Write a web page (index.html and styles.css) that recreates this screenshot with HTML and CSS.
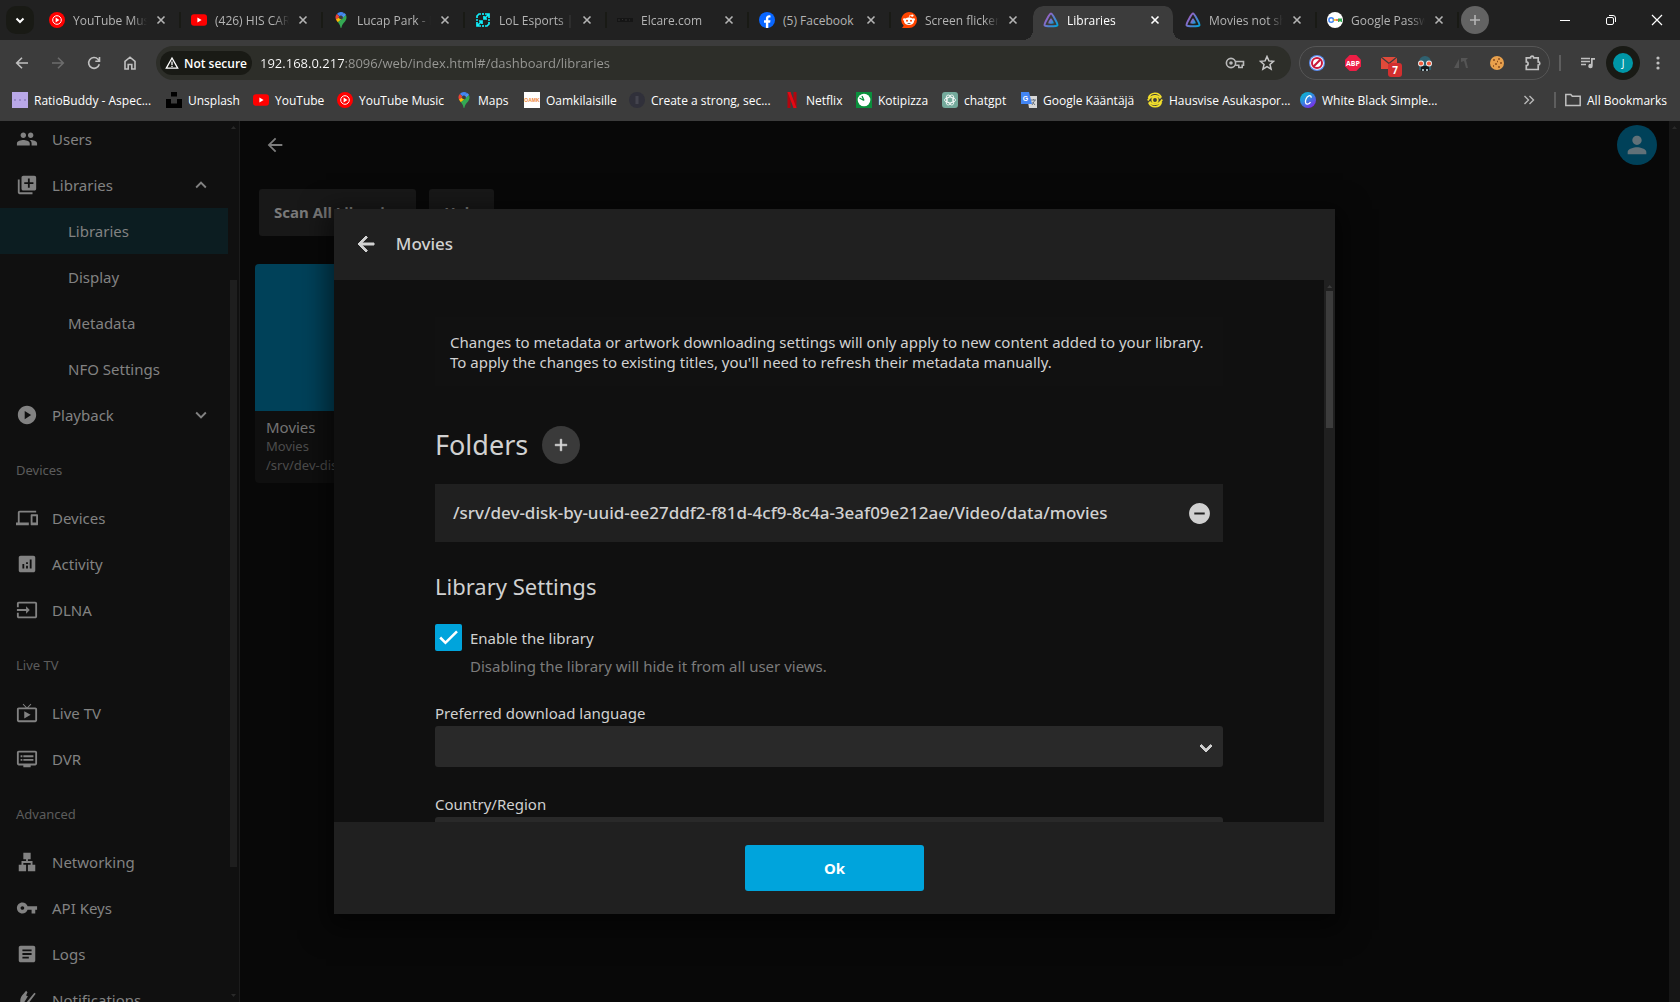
FILE: index.html
```html
<!DOCTYPE html>
<html lang="en">
<head>
<meta charset="utf-8">
<title>Libraries</title>
<link rel="stylesheet" href="styles.css">
</head>
<body>
<svg class="sprite" aria-hidden="true">
  <defs>
    <linearGradient id="jf" x1="0" y1="0.3" x2="1" y2="1"><stop offset="0" stop-color="#aa5cc3"/><stop offset="1" stop-color="#00a4dc"/></linearGradient>
    <linearGradient id="cv" x1="0" y1="0" x2="0.7" y2="1"><stop offset="0" stop-color="#00c4cc"/><stop offset="0.5" stop-color="#2f8be0"/><stop offset="1" stop-color="#7d2ae8"/></linearGradient>
  </defs>
  <symbol id="i-close" viewBox="0 0 16 16"><path d="M4.500 4.500l7 7M11.500 4.500l-7 7" stroke="currentColor" stroke-width="1.600" fill="none"/></symbol>
  <symbol id="i-ytm" viewBox="0 0 16 16"><circle cx="8" cy="8" r="8" fill="#f00"/><circle cx="8" cy="8" r="4.300" fill="none" stroke="#fff" stroke-width="1"/><path d="M6.600 5.600v4.800L10.400 8z" fill="#fff"/></symbol>
  <symbol id="i-yt" viewBox="0 0 16 16"><rect y="2.300" width="16" height="11.400" rx="3" fill="#f00"/><path d="M6.400 5.600v4.800L10.600 8z" fill="#fff"/></symbol>
  <symbol id="i-maps" viewBox="0 0 16 16"><path d="M8 0a5.500 5.500 0 0 0-4.200 2l3 2.500L11 .9A5.500 5.500 0 0 0 8 0z" fill="#4285f4"/><path d="M3.800 2A5.400 5.400 0 0 0 3.300 8.200L6.500 4.400z" fill="#ea4335"/><path d="M11 .9L6.500 4.400l3 2.500 3.600-4A5.600 5.600 0 0 0 11 .9z" fill="#4a90f5"/><path d="M6.500 5.200L3 7.600c.5 1 1.200 1.800 1.900 2.700L9.600 6.700z" fill="#fbbc04"/><path d="M13 2.900L4.900 10.300C6.300 12 7.300 13.500 7.400 15.200c.1.900 1.100.9 1.200 0 .3-3.700 4.900-5.500 4.900-9.700 0-1-.2-1.800-.5-2.600z" fill="#34a853"/><circle cx="8" cy="5.400" r="1.900" fill="#3c3c3c"/></symbol>
  <symbol id="i-jf" viewBox="0 0 16 16"><path d="M8 1.600C6.700 1.600.9 12 1.600 13.300s12.100 1.300 12.800 0S9.300 1.600 8 1.600z" fill="none" stroke="url(#jf)" stroke-width="2"/><path d="M8 6.300c-.7 0-3 4.300-2.700 4.900s5.100.6 5.400 0S8.700 6.300 8 6.300z" fill="url(#jf)"/></symbol>
  <symbol id="i-back" viewBox="0 0 24 24"><path d="M20 11H7.830l5.590-5.590L12 4l-8 8 8 8 1.410-1.410L7.830 13H20v-2z" fill="currentColor"/></symbol>
  <symbol id="i-down" viewBox="0 0 24 24"><path d="M16.590 8.590L12 13.170 7.410 8.590 6 10l6 6 6-6z" fill="currentColor"/></symbol>
</svg>

<header class="browser">
  <div class="tabstrip">
    <button class="tab-search" aria-label="Search tabs"><svg viewBox="0 0 16 16"><path d="M4.500 6.500L8 10l3.500-3.500" fill="none" stroke="#fff" stroke-width="2"/></svg></button>
    <div class="tab"><svg class="fav"><use href="#i-ytm"/></svg><span class="tab-title">YouTube Music</span><button class="tab-close" aria-label="Close"><svg><use href="#i-close"/></svg></button></div>
    <div class="tab"><svg class="fav"><use href="#i-yt"/></svg><span class="tab-title">(426) HIS CARRY</span><button class="tab-close" aria-label="Close"><svg><use href="#i-close"/></svg></button></div>
    <div class="tab"><svg class="fav"><use href="#i-maps"/></svg><span class="tab-title">Lucap Park - Map</span><button class="tab-close" aria-label="Close"><svg><use href="#i-close"/></svg></button></div>
    <div class="tab"><svg class="fav" viewBox="0 0 16 16"><g fill="none" stroke="#0ff0fc" stroke-width="1.700"><path d="M2 6V4l2-2h2M10 2h4v4M14 10v2l-2 2h-2M6 14H2v-4M8 1v2M1 8h2M13 8h2M8 13v2M13.500 2.500L9.500 6.500M2.500 13.500L6.500 9.500M9 4v3h3M7 12V9H4"/></g></svg><span class="tab-title">LoL Esports | Schedule</span><button class="tab-close" aria-label="Close"><svg><use href="#i-close"/></svg></button></div>
    <div class="tab"><svg class="fav" viewBox="0 0 16 16"><path d="M0 6h16v4H0z" fill="#151515"/><path d="M1 8h2M5 7.500h1M8 8h2M12 8h1" stroke="#333"/></svg><span class="tab-title">Elcare.com</span><button class="tab-close" aria-label="Close"><svg><use href="#i-close"/></svg></button></div>
    <div class="tab"><svg class="fav" viewBox="0 0 16 16"><circle cx="8" cy="8" r="8" fill="#0866ff"/><path d="M6.900 16v-5.300H5V8.300h1.900V7c0-2.400 1.200-3.700 3.300-3.700.6 0 1 .1 1.300.2v2.100h-1c-.9 0-1.200.4-1.200 1.300v1.400h2.200l-.4 2.400H9.300V16z" fill="#fff"/></svg><span class="tab-title tab-title-full">(5) Facebook</span><button class="tab-close" aria-label="Close"><svg><use href="#i-close"/></svg></button></div>
    <div class="tab tab-last"><svg class="fav" viewBox="0 0 16 16"><path d="M8 0a8 8 0 1 1 0 16H1l1.700-2.300A8 8 0 0 1 8 0z" fill="#ff4500"/><ellipse cx="8" cy="9.300" rx="5" ry="3.800" fill="#fff"/><circle cx="3.300" cy="7.500" r="1.300" fill="#fff"/><circle cx="12.700" cy="7.500" r="1.300" fill="#fff"/><circle cx="11.300" cy="3.600" r="1.200" fill="#fff"/><path d="M8 6l.8-2.800 2 .5" stroke="#fff" stroke-width=".7" fill="none"/><circle cx="6" cy="8.800" r="1" fill="#ff4500"/><circle cx="10" cy="8.800" r="1" fill="#ff4500"/><path d="M6 11c1 .9 3 .9 4 0z" fill="#222"/></svg><span class="tab-title">Screen flickering</span><button class="tab-close" aria-label="Close"><svg><use href="#i-close"/></svg></button></div>
    <div class="tab tab-active"><svg class="fav"><use href="#i-jf"/></svg><span class="tab-title">Libraries</span><button class="tab-close" aria-label="Close"><svg><use href="#i-close"/></svg></button></div>
    <div class="tab"><svg class="fav"><use href="#i-jf"/></svg><span class="tab-title">Movies not showing</span><button class="tab-close" aria-label="Close"><svg><use href="#i-close"/></svg></button></div>
    <div class="tab"><svg class="fav" viewBox="0 0 16 16"><circle cx="8" cy="8" r="8" fill="#fff"/><circle cx="4.200" cy="8" r="2.300" fill="none" stroke="#4285f4" stroke-width="1.500"/><path d="M6.500 7.200H9v1.600H6.500z" fill="#fbbc04"/><path d="M9 7.200h2v1.600H9z" fill="#ea4335"/><path d="M11 6.500h4v3.500h-1.500V9h-1v1H11z" fill="#34a853"/></svg><span class="tab-title">Google Password</span><button class="tab-close" aria-label="Close"><svg><use href="#i-close"/></svg></button></div>
    <button class="new-tab" aria-label="New tab"><svg viewBox="0 0 16 16"><path d="M8 3v10M3 8h10" stroke="#b4b4b4" stroke-width="1.600"/></svg></button>
    <div class="window-controls">
      <button aria-label="Minimize"><svg viewBox="0 0 12 12"><path d="M1 6.500h10" stroke="#fff"/></svg></button>
      <button aria-label="Restore"><svg viewBox="0 0 12 12"><rect x="1.500" y="3.500" width="7" height="7" rx="1.500" fill="none" stroke="#fff"/><path d="M4 1.500h4a2.500 2.500 0 0 1 2.500 2.500v4" fill="none" stroke="#fff"/></svg></button>
      <button aria-label="Close window"><svg viewBox="0 0 12 12"><path d="M1 1l10 10M11 1L1 11" stroke="#fff" stroke-width="1.200"/></svg></button>
    </div>
  </div>

  <div class="toolbar">
    <button class="nav-btn" aria-label="Back"><svg viewBox="0 0 16 16"><path d="M14 8H3M8 2.700L2.700 8 8 13.300" fill="none" stroke="#c0c0c0" stroke-width="1.600"/></svg></button>
    <button class="nav-btn" aria-label="Forward"><svg viewBox="0 0 16 16"><path d="M2 8h11M8 2.700L13.300 8 8 13.300" fill="none" stroke="#6c6c6c" stroke-width="1.600"/></svg></button>
    <button class="nav-btn" aria-label="Reload"><svg viewBox="0 0 16 16"><path d="M13.300 9.300A5.400 5.400 0 1 1 12 4.200L13.300 5.600M13.500 2v4.200H9.300" fill="none" stroke="#c0c0c0" stroke-width="1.600"/></svg></button>
    <button class="nav-btn" aria-label="Home"><svg viewBox="0 0 16 16"><path d="M3 14V6.300L8 2.200l5 4.100V14H9.800V9.500H6.200V14z" fill="none" stroke="#c0c0c0" stroke-width="1.600"/></svg></button>
    <div class="omnibox">
      <button class="chip"><svg viewBox="0 0 14 14"><path d="M7 2L1.300 12.200h11.400z" fill="none" stroke="#fff" stroke-width="1.300"/><path d="M7 5.500v3.500M7 9.800v1.300" stroke="#fff" stroke-width="1.300"/></svg>Not secure</button>
      <input class="url" type="text" aria-label="Address" value="192.168.0.217:8096/web/index.html#/dashboard/libraries">
      <button class="omni-btn" aria-label="Passwords"><svg viewBox="0 0 20 16"><circle cx="6" cy="8" r="4.600" fill="none" stroke="#b9b9b9" stroke-width="1.600"/><circle cx="6" cy="8" r="1.800" fill="#b9b9b9"/><path d="M10.500 6.500h8v3.700h-1.300v2.300h-3.400v-2.300h-3.500" fill="none" stroke="#b9b9b9" stroke-width="1.600"/></svg></button>
      <button class="omni-btn" aria-label="Bookmark"><svg viewBox="0 0 16 16"><path d="M8 1.500l1.900 4.400 4.700.4-3.600 3.100 1.100 4.700L8 11.600l-4.100 2.500L5 9.400 1.400 6.300l4.700-.4z" fill="none" stroke="#c8c8c8" stroke-width="1.500"/></svg></button>
    </div>
    <div class="extensions">
      <button aria-label="Blocker"><svg viewBox="0 0 16 16"><circle cx="8" cy="8" r="8" fill="#5b8def"/><circle cx="8" cy="8" r="6.800" fill="#fff"/><circle cx="8" cy="8" r="5" fill="#fff" stroke="#c8193c" stroke-width="2"/><path d="M4.500 11.500l7-7" stroke="#c8193c" stroke-width="2.200"/></svg></button>
      <button aria-label="Adblock"><svg viewBox="0 0 16 16"><path d="M4.700 0h6.600L16 4.700v6.600L11.300 16H4.700L0 11.300V4.700z" fill="#ed1e45"/><text x="8" y="10.600" class="abp">ABP</text></svg></button>
      <button class="has-badge" aria-label="Mail"><svg viewBox="0 0 16 16"><path d="M0 2h16v12H0z" fill="#e04a3a"/><path d="M0 2l8 6.500L16 2" fill="none" stroke="#3c3c3c" stroke-width="1.300"/></svg><span class="badge">7</span></button>
      <button aria-label="Robot"><svg viewBox="0 0 16 16"><path d="M2 7a6 6 0 0 1 12 0v8H2z" fill="#2f6170"/><path d="M4 11h8v5H4z" fill="#151a1e"/><path d="M5 15h2M9 15h2" stroke="#9fb0b5" stroke-width="2"/><circle cx="4" cy="8.500" r="3" fill="#eee"/><circle cx="12" cy="8.500" r="3" fill="#eee"/><circle cx="4" cy="8.500" r="2.100" fill="#f05b3c"/><circle cx="12" cy="8.500" r="2.100" fill="#f05b3c"/></svg></button>
      <button aria-label="Inactive extension"><svg viewBox="0 0 16 16"><path d="M1 13L6 4v9zM8 3h7l-2 2 2 8h-2l-2-7-3 1z" fill="#555"/></svg></button>
      <button aria-label="Cookies"><svg viewBox="0 0 16 16"><circle cx="8" cy="8" r="7" fill="#e8a04c"/><path d="M4 5h2M9 4h2M11 8h2M6 9h2M4 11h1M9 12h2M8 6.500h1" stroke="#8a4c1c" stroke-width="1.600"/></svg></button>
      <button aria-label="Extensions"><svg viewBox="0 0 16 16"><path d="M1.300 2.800h4.200a1.600 1.600 0 0 1 3.200 0h4.500v4a1.600 1.600 0 0 1 0 3.200v4.500H1.300v-4c2.400 0 2.400-3.600 0-3.600z" fill="none" stroke="#c0c0c0" stroke-width="1.700"/></svg></button>
    </div>
    <span class="bar-divider"></span>
    <button class="nav-btn" aria-label="Media"><svg viewBox="0 0 16 16"><path d="M1 3.500h9M1 6.500h9M1 9.500h5" stroke="#c0c0c0" stroke-width="1.500"/><path d="M11 3h4v1.800h-2.300V11a2.200 2.200 0 1 1-1.700-2.100z" fill="#c0c0c0"/></svg></button>
    <button class="profile" aria-label="Profile"><span>J</span></button>
    <button class="nav-btn" aria-label="Menu"><svg viewBox="0 0 16 16" fill="#c0c0c0"><circle cx="8" cy="3" r="1.600"/><circle cx="8" cy="8" r="1.600"/><circle cx="8" cy="13" r="1.600"/></svg></button>
  </div>

  <nav class="bookmarks" aria-label="Bookmarks">
    <a href="#"><svg viewBox="0 0 16 16"><path d="M0 0h16v16H0z" fill="#b9a8e8"/><path d="M2 8h2M7 8h2M12 8h2" stroke="#8f7fc0" stroke-width="1.500"/></svg>RatioBuddy - Aspec...</a>
    <a href="#"><svg viewBox="0 0 16 16"><path d="M5 0h6v4.500H5zM0 7h5v4.500h6V7h5v9H0z" fill="#000"/></svg>Unsplash</a>
    <a href="#"><svg><use href="#i-yt"/></svg>YouTube</a>
    <a href="#"><svg><use href="#i-ytm"/></svg>YouTube Music</a>
    <a href="#"><svg><use href="#i-maps"/></svg>Maps</a>
    <a href="#"><svg viewBox="0 0 16 16"><path d="M0 0h16v16H0z" fill="#fff"/><text x="8" y="10" class="oamk">OAMK</text></svg>Oamkilaisille</a>
    <a href="#"><svg viewBox="0 0 16 16"><circle cx="8" cy="8" r="8" fill="#30303a"/><path d="M8 4v8" stroke="#44444e" stroke-width="3"/></svg>Create a strong, sec...</a>
    <a href="#"><svg viewBox="0 0 16 16"><path d="M3.500 0h3v16h-3zM9.500 0h3v16h-3z" fill="#b1060f"/><path d="M3.500 0h3l6 16h-3z" fill="#e50914"/></svg>Netflix</a>
    <a href="#"><svg viewBox="0 0 16 16"><path d="M0 0h16v16H0z" fill="#0a8f3c"/><circle cx="8" cy="8" r="6.300" fill="#fff"/><path d="M8 8.500L3.500 6M8 8.500L6 4" stroke="#0a8f3c" stroke-width="1.300"/></svg>Kotipizza</a>
    <a href="#"><svg viewBox="0 0 16 16"><rect width="16" height="16" rx="3" fill="#74aa9c"/><g fill="none" stroke="#fff" stroke-width=".8"><ellipse cx="8" cy="8" rx="5.500" ry="2.800"/><ellipse cx="8" cy="8" rx="5.500" ry="2.800" transform="rotate(60 8 8)"/><ellipse cx="8" cy="8" rx="5.500" ry="2.800" transform="rotate(120 8 8)"/></g></svg>chatgpt</a>
    <a href="#"><svg viewBox="0 0 16 16"><path d="M6 4h10v12H8z" fill="#d8d8d8"/><path d="M0 0h8l3 12H0z" fill="#4285f4"/><text x="4.500" y="8.500" class="gt">G</text><path d="M10 8h5M12.500 7v1M11 13l3-5M11.500 10l2.500 3" stroke="#6a7480" fill="none"/></svg>Google Kääntäjä</a>
    <a href="#"><svg viewBox="0 0 16 16"><g fill="none" stroke="#f2df2c" stroke-width="1.700"><circle cx="8" cy="8" r="2.800"/><path d="M1.500 6a6.800 6.800 0 0 1 12.800-.5M1.700 10.500A6.800 6.800 0 0 0 14.500 10M.8 8.500C4 3 11 2.500 13.500 6.500M2.500 9.500C5 13.500 12 13.500 15.200 7.500"/></g></svg>Hausvise Asukaspor...</a>
    <a href="#"><svg viewBox="0 0 16 16"><circle cx="8" cy="8" r="8" fill="url(#cv)"/><path d="M11 5.800c.5-1.700-.7-2.600-2.200-1.900C6.300 5 5 8.500 5.600 10.700c.6 2 3.400 1.900 4.900-.5" fill="none" stroke="#fff" stroke-width="1.300"/></svg>White Black Simple...</a>
    <button class="more" aria-label="More bookmarks"><svg viewBox="0 0 16 16"><path d="M3.500 4l4 4-4 4M8.500 4l4 4-4 4" fill="none" stroke="#b9b9b9" stroke-width="1.400"/></svg></button>
    <span class="bar-divider"></span>
    <a href="#"><svg viewBox="0 0 16 16"><path d="M.8 13.500v-11h5l1.500 1.800h7.900v9.200z" fill="none" stroke="#c0c0c0" stroke-width="1.500"/></svg>All Bookmarks</a>
  </nav>
</header>

<div class="page">
  <aside class="sidebar">
    <nav class="side-nav" aria-label="Dashboard">
      <a class="item" href="#"><svg viewBox="0 0 24 24"><path d="M16 11c1.660 0 2.990-1.340 2.990-3S17.660 5 16 5s-3 1.340-3 3 1.340 3 3 3zm-8 0c1.660 0 2.990-1.340 2.990-3S9.660 5 8 5 5 6.340 5 8s1.340 3 3 3zm0 2c-2.330 0-7 1.170-7 3.500V19h14v-2.500c0-2.330-4.670-3.500-7-3.500zm8 0c-.29 0-.62.020-.97.050 1.160.84 1.970 1.970 1.970 3.450V19h6v-2.500c0-2.330-4.670-3.500-7-3.500z"/></svg><span>Users</span></a>
      <a class="item" href="#"><svg viewBox="0 0 24 24"><path d="M4 6H2v14c0 1.100.9 2 2 2h14v-2H4V6zm16-4H8c-1.100 0-2 .9-2 2v12c0 1.100.9 2 2 2h12c1.100 0 2-.9 2-2V4c0-1.100-.9-2-2-2zm-1 9h-4v4h-2v-4H9V9h4V5h2v4h4v2z"/></svg><span>Libraries</span><svg class="caret" viewBox="0 0 24 24"><path d="M12 8l-6 6 1.410 1.410L12 10.830l4.590 4.580L18 14z"/></svg></a>
      <a class="item sub selected" href="#"><span>Libraries</span></a>
      <a class="item sub" href="#"><span>Display</span></a>
      <a class="item sub" href="#"><span>Metadata</span></a>
      <a class="item sub" href="#"><span>NFO Settings</span></a>
      <a class="item" href="#"><svg viewBox="0 0 24 24"><path d="M12 2C6.480 2 2 6.480 2 12s4.480 10 10 10 10-4.480 10-10S17.520 2 12 2zM9.500 16.500v-9l7 4.500z"/></svg><span>Playback</span><svg class="caret"><use href="#i-down"/></svg></a>
      <h2 class="group">Devices</h2>
      <a class="item" href="#"><svg viewBox="0 0 24 24"><path d="M4 6h18V4H4c-1.100 0-2 .9-2 2v11H0v3h14v-3H4V6zm19 2h-6c-.55 0-1 .45-1 1v10c0 .55.450 1 1 1h6c.55 0 1-.45 1-1V9c0-.55-.45-1-1-1zm-1 9h-4v-7h4v7z"/></svg><span>Devices</span></a>
      <a class="item" href="#"><svg viewBox="0 0 24 24"><path d="M19 3H5c-1.100 0-2 .9-2 2v14c0 1.100.9 2 2 2h14c1.100 0 2-.9 2-2V5c0-1.100-.9-2-2-2zM9 17H7v-5h2v5zm4 0h-2v-3h2v3zm0-5h-2v-2h2v2zm4 5h-2V7h2v10z"/></svg><span>Activity</span></a>
      <a class="item" href="#"><svg viewBox="0 0 24 24"><path d="M21 3.010H3c-1.100 0-2 .9-2 2V9h2V4.990h18v14.030H3V15H1v4.010c0 1.100.9 1.980 2 1.980h18c1.100 0 2-.88 2-1.980v-14c0-1.110-.9-2-2-2zM11 16l4-4-4-4v3H1v2h10v3z"/></svg><span>DLNA</span></a>
      <h2 class="group">Live TV</h2>
      <a class="item" href="#"><svg viewBox="0 0 24 24"><path d="M21 6h-7.590l3.290-3.290L16 2l-4 4-4-4-.7.710L10.590 6H3c-1.100 0-2 .89-2 2v12c0 1.100.9 2 2 2h18c1.100 0 2-.9 2-2V8c0-1.110-.9-2-2-2zm0 14H3V8h18v12zM9 10v8l7-4z"/></svg><span>Live TV</span></a>
      <a class="item" href="#"><svg viewBox="0 0 24 24"><path d="M21 3H3c-1.100 0-2 .9-2 2v12c0 1.100.9 2 2 2h5v2h8v-2h5c1.100 0 1.990-.9 1.990-2L23 5c0-1.100-.9-2-2-2zm0 14H3V5h18v12zm-2-9H8v2h11V8zm0 4H8v2h11v-2zM7 8H5v2h2V8zm0 4H5v2h2v-2z"/></svg><span>DVR</span></a>
      <h2 class="group">Advanced</h2>
      <a class="item" href="#"><svg viewBox="0 0 24 24"><path d="M13 22h8v-7h-3v-4h-5V9h3V2H8v7h3v2H6v4H3v7h8v-7H8v-2h8v2h-3z"/></svg><span>Networking</span></a>
      <a class="item" href="#"><svg viewBox="0 0 24 24"><path d="M12.650 10C11.830 7.670 9.610 6 7 6c-3.310 0-6 2.690-6 6s2.690 6 6 6c2.610 0 4.830-1.670 5.650-4H17v4h4v-4h2v-4H12.650zM7 14c-1.100 0-2-.9-2-2s.9-2 2-2 2 .9 2 2-.9 2-2 2z"/></svg><span>API Keys</span></a>
      <a class="item" href="#"><svg viewBox="0 0 24 24"><path d="M19 3H5c-1.100 0-2 .9-2 2v14c0 1.100.9 2 2 2h14c1.100 0 2-.9 2-2V5c0-1.100-.9-2-2-2zm-5 14H7v-2h7v2zm3-4H7v-2h10v2zm0-4H7V7h10v2z"/></svg><span>Logs</span></a>
      <a class="item" href="#"><svg viewBox="0 0 24 24"><path d="M5 16c-1-4 0-8 3.500-11L11 2l1.500 1.500L11 7l2 1-5 8zM12 14l8-10 1.500 1.300L14 15zM6 17l9 5h-9z"/></svg><span>Notifications</span></a>
    </nav>
    <div class="side-scroll" aria-hidden="true"><i class="arrow-up"></i><i class="thumb"></i><i class="arrow-down"></i></div>
  </aside>

  <main class="main">
    <div class="topbar">
      <button aria-label="Back"><svg><use href="#i-back"/></svg></button>
      <button class="user" aria-label="User"><svg viewBox="0 0 24 24"><path d="M12 12c2.210 0 4-1.790 4-4s-1.790-4-4-4-4 1.790-4 4 1.790 4 4 4zm0 2c-2.670 0-8 1.340-8 4v2h16v-2c0-2.660-5.330-4-8-4z" fill="#617178"/></svg></button>
    </div>
    <div class="actions">
      <button>Scan All Libraries</button>
      <button>Help</button>
    </div>
    <article class="card">
      <div class="card-image"></div>
      <div class="card-text">
        <h3>Movies</h3>
        <p>Movies</p>
        <p>/srv/dev-disk-by-uuid</p>
      </div>
    </article>
  </main>
  <div class="page-scroll" aria-hidden="true"><i class="arrow-up"></i></div>

  <div class="overlay">
    <form class="dialog" role="dialog" aria-labelledby="dlg-title">
      <header class="dialog-head">
        <button type="button" aria-label="Close"><svg><use href="#i-back"/></svg></button>
        <h1 id="dlg-title">Movies</h1>
      </header>
      <div class="dialog-body">
        <div class="scroller">
          <div class="content">
            <p class="note">Changes to metadata or artwork downloading settings will only apply to new content added to your library. To apply the changes to existing titles, you'll need to refresh their metadata manually.</p>
            <div class="folders">
              <h2>Folders</h2>
              <button type="button" aria-label="Add folder"><svg viewBox="0 0 24 24"><path d="M19 13h-6v6h-2v-6H5v-2h6V5h2v6h6v2z" fill="#ddd" stroke="#ddd" stroke-width=".6"/></svg></button>
            </div>
            <div class="folder">
              <span>/srv/dev-disk-by-uuid-ee27ddf2-f81d-4cf9-8c4a-3eaf09e212ae/Video/data/movies</span>
              <button type="button" aria-label="Remove folder"><svg viewBox="0 0 24 24"><path d="M12 2C6.480 2 2 6.480 2 12s4.480 10 10 10 10-4.480 10-10S17.520 2 12 2zm5 11H7v-2h10v2z" fill="#d0d0d0"/></svg></button>
            </div>
            <h2 class="section">Library Settings</h2>
            <div class="check">
              <input type="checkbox" id="enable" checked>
              <label for="enable">Enable the library</label>
              <p>Disabling the library will hide it from all user views.</p>
            </div>
            <div class="field">
              <label for="lang">Preferred download language</label>
              <div class="select-wrap"><select id="lang"><option></option></select><svg><use href="#i-down"/></svg></div>
            </div>
            <div class="field">
              <label for="country">Country/Region</label>
              <div class="select-wrap"><select id="country"><option></option></select><svg><use href="#i-down"/></svg></div>
            </div>
          </div>
        </div>
        <div class="dialog-scroll" aria-hidden="true"><i class="arrow-up"></i><i class="thumb"></i></div>
      </div>
      <footer class="dialog-foot"><button type="submit">Ok</button></footer>
    </form>
  </div>
</div>
</body>
</html>
```
FILE: styles.css
```css
* { box-sizing: border-box; }

body {
  margin: 0;
  height: 100vh;
  display: flex;
  flex-direction: column;
  overflow: hidden;
  background: #080808;
  font-family: "Noto Sans", sans-serif;
}

button {
  border: 0;
  padding: 0;
  margin: 0;
  background: none;
  font: inherit;
  color: inherit;
}

a { color: inherit; text-decoration: none; }
h1, h2, h3, p { margin: 0; font-weight: 400; }
svg { display: block; flex: none; }
.sprite { position: absolute; width: 0; height: 0; }

/* Browser frame */
.browser {
  flex: none;
  background: #3c3c3c;
  font-family: "Open Sans", sans-serif;
  font-size: 12px;
  color: #fff;
}

.tabstrip {
  display: flex;
  align-items: center;
  height: 40px;
  padding-left: 6px;
  background: #212121;
}

.tab-search {
  display: grid;
  place-items: center;
  width: 28px;
  height: 28px;
  margin-right: 5px;
  border-radius: 10px;
  background: #191a15;
}
.tab-search svg { width: 16px; height: 16px; }

.tab {
  flex: 0 1 142px;
  min-width: 0;
  display: flex;
  align-items: center;
  height: 16px;
  padding: 0 10px;
  border-right: 2px solid #191a15;
  color: #b4b4b4;
}
.tab-last { border-color: transparent; }
.fav { width: 16px; height: 16px; margin-right: 8px; }
.tab-title {
  flex: 1;
  overflow: hidden;
  white-space: nowrap;
  line-height: 16px;
  padding-top: 1px;
  mask-image: linear-gradient(90deg, #000 80%, transparent);
}
.tab-title-full { mask-image: none; }
.tab-close { width: 16px; height: 16px; margin-left: 6px; }
.tab-close svg { width: 16px; height: 16px; }

.tab-active {
  align-self: flex-end;
  height: 34px;
  padding-bottom: 6px;
  border-right-color: transparent;
  border-radius: 10px 10px 0 0;
  background: #3c3c3c;
  background-clip: padding-box;
  color: #fff;
  position: relative;
}
.tab-active::before, .tab-active::after {
  content: "";
  position: absolute;
  bottom: 0;
  width: 10px;
  height: 10px;
}
.tab-active::before { right: 100%; background: radial-gradient(circle at 0 0, transparent 10px, #3c3c3c 10px); }
.tab-active::after { left: 100%; background: radial-gradient(circle at 100% 0, transparent 10px, #3c3c3c 10px); }

.new-tab {
  display: grid;
  place-items: center;
  width: 28px;
  height: 28px;
  margin-left: 2px;
  border-radius: 50%;
  background: #636363;
}
.new-tab svg { width: 16px; height: 16px; }

.window-controls { display: flex; margin-left: auto; }
.window-controls button { display: grid; place-items: center; width: 46px; height: 40px; }
.window-controls svg { width: 12px; height: 12px; }

.toolbar {
  display: flex;
  align-items: center;
  height: 46px;
  padding: 0 4px;
}
.nav-btn { display: grid; place-items: center; width: 36px; height: 34px; }
.nav-btn svg { width: 16px; height: 16px; }

.omnibox {
  flex: 1;
  display: flex;
  align-items: center;
  height: 34px;
  margin: 0 8px;
  padding: 0 8px 0 4px;
  border-radius: 17px;
  background: #2d2e29;
}
.chip {
  display: flex;
  align-items: center;
  gap: 5px;
  width: 92px;
  height: 24px;
  padding-left: 5px;
  border-radius: 12px;
  background: #191a15;
  font-weight: 600;
  white-space: nowrap;
}
.chip svg { width: 14px; height: 14px; }
.url {
  flex: 1;
  min-width: 0;
  height: 24px;
  margin-left: 8px;
  padding: 0;
  border: 0;
  outline: 0;
  background: linear-gradient(90deg, #fff 84px, #9a9a97 84px) text;
  color: transparent;
  font: 13px/24px "Open Sans", sans-serif;
}
.omni-btn { display: grid; place-items: center; width: 32px; height: 24px; }
.omni-btn svg { height: 16px; }

.extensions {
  display: flex;
  gap: 3px;
  height: 34px;
  border: 1px solid #565656;
  border-radius: 17px;
}
.extensions button { display: grid; place-items: center; width: 33px; position: relative; }
.extensions svg { width: 16px; height: 16px; }
.abp { font: 700 7px "Open Sans", sans-serif; fill: #fff; text-anchor: middle; }
.badge {
  position: absolute;
  right: 3px;
  bottom: 2px;
  width: 14px;
  border-radius: 3px;
  background: #d32f2f;
  font-size: 10px;
  font-weight: 700;
  line-height: 14px;
}

.bar-divider { width: 2px; height: 16px; margin: 0 9px; background: #5e5e5e; }
.profile {
  display: grid;
  place-items: center;
  width: 34px;
  height: 34px;
  border-radius: 50%;
  background: #191a15;
}
.profile span { width: 20px; border-radius: 50%; background: #0097a7; font-size: 10px; line-height: 20px; }

.bookmarks {
  display: grid;
  grid-template-columns: 154px 87px 84px 119px 68px 105px 155px 72px 86px 79px 126px 153px 1fr 32px 20px auto;
  align-items: center;
  height: 35px;
  padding: 0 13px 7px 12px;
  white-space: nowrap;
}
.bookmarks a { display: flex; align-items: center; gap: 6px; }
.bookmarks svg { width: 16px; height: 16px; }
.bookmarks .more { display: grid; place-items: center; }
.oamk { font: 700 5px "Liberation Sans", sans-serif; fill: #f08a3c; text-anchor: middle; }
.gt { font: 700 7px "Liberation Sans", sans-serif; fill: #fff; text-anchor: middle; }

/* Page behind the dialog */
.page {
  flex: 1;
  min-height: 0;
  display: flex;
  position: relative;
}

.arrow-up, .arrow-down { width: 5px; height: 3px; background: #2a2a2a; }
.arrow-up { clip-path: polygon(50% 0, 100% 100%, 0 100%); }
.arrow-down { clip-path: polygon(0 0, 100% 0, 50% 100%); }

.sidebar {
  flex: none;
  display: flex;
  width: 240px;
  border-right: 1px solid #1c1c1c;
  background: #101010;
  overflow: hidden;
}
.side-nav { flex: 1; margin-top: -5px; }
.item {
  display: flex;
  align-items: center;
  height: 46px;
  padding: 0 16px;
  color: #828282;
  font-size: 15px;
  line-height: 22px;
}
.item svg { width: 22px; height: 22px; margin-right: 14px; fill: #828282; }
.item .caret { margin: 0 0 0 auto; }
.sub { padding-left: 68px; }
.selected { background: #0c1d21; }
.group {
  height: 49px;
  margin-top: 8px;
  padding-left: 16px;
  color: #5c5c5c;
  font-size: 13px;
  line-height: 49px;
}
.side-scroll {
  display: flex;
  flex-direction: column;
  align-items: center;
  width: 11px;
  padding: 5px 0;
}
.side-scroll .thumb { flex: 1; width: 7px; margin: 151px 0 127px; background: #1e1e1e; }

.main { flex: 1; min-width: 0; }
.topbar {
  display: flex;
  justify-content: space-between;
  align-items: center;
  height: 48px;
  padding: 0 12px 0 24px;
  color: #7c7c7c;
}
.topbar svg { width: 22px; height: 22px; }
.topbar .user {
  display: grid;
  place-items: center;
  width: 40px;
  height: 40px;
  border-radius: 50%;
  background: #004159;
}
.topbar .user svg { width: 28px; height: 28px; }
.actions { display: flex; gap: 13px; padding: 20px 19px 0; }
.actions button {
  height: 47px;
  padding: 0 15px 2px;
  border-radius: 3px;
  background: #181818;
  color: #7a7a7a;
  font-size: 15px;
  font-weight: 700;
}
.card {
  width: 260px;
  margin: 28px 15px;
  border-radius: 4px;
  overflow: hidden;
  background: #0f0f0f;
}
.card-image { height: 147px; background: #004159; }
.card-text { height: 72px; padding: 6px 11px; white-space: nowrap; }
.card h3 { color: #747474; font-size: 15px; line-height: 20px; }
.card p { color: #4c4c4c; font-size: 13px; line-height: 19px; }

.page-scroll {
  width: 11px;
  padding: 5px 3px;
  background: #161616;
}
.page-scroll .arrow-up { display: block; }

/* Library options dialog */
.overlay {
  position: absolute;
  inset: 0 11px 0 0;
  display: flex;
  align-items: center;
  justify-content: center;
}
.dialog {
  width: 60%;
  height: 80%;
  display: flex;
  flex-direction: column;
  background: #202020;
  box-shadow: 0 8px 24px 8px rgba(0, 0, 0, .5);
  color: #d1d1d1;
  font-size: 15px;
}
.dialog-head {
  flex: none;
  display: flex;
  align-items: center;
  gap: 18px;
  height: 71px;
  padding: 0 0 2px 20px;
}
.dialog-head svg { width: 24px; height: 24px; stroke: currentColor; stroke-width: 1px; }
.dialog-head h1 { font-size: 17px; font-weight: 500; line-height: 24px; }

.dialog-body { flex: 1; min-height: 0; display: flex; }
.scroller { flex: 1; overflow: hidden; background: #101010; }
.content { width: 80%; max-width: 788px; margin: 0 auto; }
.dialog-scroll {
  display: flex;
  flex-direction: column;
  align-items: center;
  width: 11px;
  padding-top: 5px;
}
.dialog-scroll .arrow-up { background: #3c3c3c; }
.dialog-scroll .thumb { width: 7px; height: 137px; margin-top: 3px; background: #3c3c3c; }

.note {
  margin-top: 37px;
  padding: 15px 15px 14px;
  background: #111;
  line-height: 20px;
}
.folders {
  display: flex;
  align-items: center;
  gap: 14px;
  margin-top: 40px;
}
.folders h2 { font-size: 27px; line-height: 38px; }
.folders button {
  display: grid;
  place-items: center;
  width: 38px;
  height: 38px;
  border-radius: 50%;
  background: #3a3a3a;
}
.folders svg { width: 20px; height: 20px; }
.folder {
  display: flex;
  align-items: center;
  justify-content: space-between;
  height: 58px;
  margin-top: 20px;
  padding: 0 11px 0 18px;
  background: #202020;
  font-size: 17px;
  font-weight: 500;
  line-height: 24px;
}
.folder svg { width: 25px; height: 25px; }
.section { margin-top: 29px; font-size: 22px; line-height: 30px; }

.check {
  display: grid;
  grid-template-columns: 27px 1fr;
  column-gap: 8px;
  align-items: center;
  margin-top: 23px;
}
.check input {
  appearance: none;
  width: 27px;
  height: 27px;
  margin: 0;
  border-radius: 2px;
  background: #00a4dc;
  display: grid;
  place-items: center;
}
.check input:checked::before {
  content: "";
  width: 20px;
  height: 20px;
  background: #fff;
  clip-path: polygon(4% 54%, 13% 45%, 35% 67%, 88% 14%, 97% 23%, 35% 85%);
}
.check p {
  grid-column: 2;
  margin-top: 5px;
  color: #7b7b7b;
  line-height: 20px;
}

.field { margin-top: 27px; }
.field label { display: block; line-height: 20px; }
.select-wrap { display: grid; align-items: center; margin-top: 3px; }
.select-wrap > * { grid-area: 1 / 1; }
.select-wrap select {
  appearance: none;
  width: 100%;
  height: 41px;
  border: 0;
  border-radius: 3px;
  background: #292929;
  color: inherit;
}
.select-wrap svg {
  width: 24px;
  height: 24px;
  justify-self: end;
  margin: 3px 5px 0 0;
  stroke: currentColor;
  stroke-width: 1px;
  pointer-events: none;
}

.dialog-foot { flex: none; padding: 23px 0; display: flex; justify-content: center; }
.dialog-foot button {
  width: 179px;
  height: 46px;
  border-radius: 3px;
  background: #00a4dc;
  color: #fff;
  font-size: 15px;
  font-weight: 700;
}
```
